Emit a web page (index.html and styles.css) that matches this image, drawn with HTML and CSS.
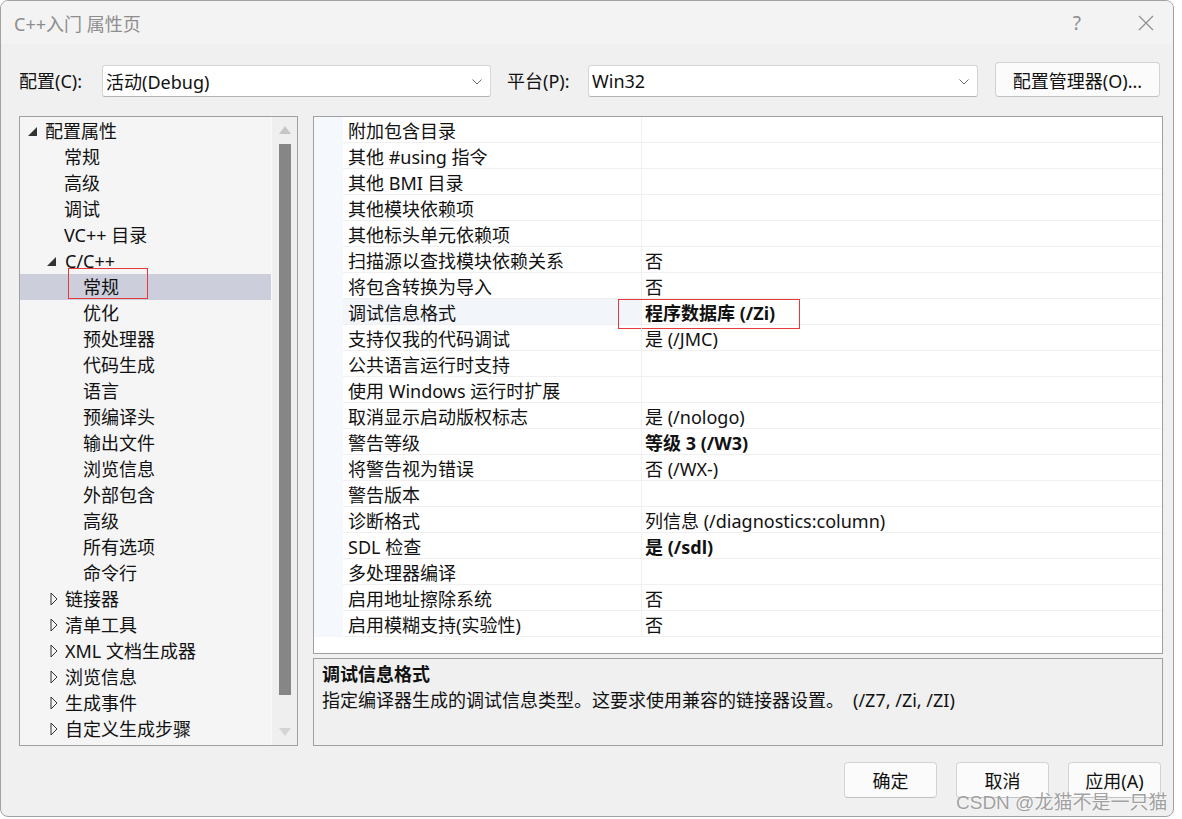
FILE: index.html
```html
<!DOCTYPE html>
<html lang="zh-CN">
<head>
    <meta charset="UTF-8">
    <meta name="viewport" content="width=device-width, initial-scale=1.0">
    <title>C++入门 属性页</title>
    <link rel="stylesheet" href="styles.css">
</head>
<body>
    <div class="window">
        <!-- 标题栏 -->
        <div class="titlebar">
            <span class="title">C++入门 属性页</span>
            <span class="tb-help">?</span>
            <span class="tb-close">
                <svg width="16" height="16" viewBox="0 0 16 16"><path d="M1 1L15 15M15 1L1 15" stroke="#8f8f8f" stroke-width="1.2" fill="none"/></svg>
            </span>
        </div>

        <div class="body">
            <!-- 配置 / 平台 -->
            <div class="config-row">
                <label class="cfg-label">配置(C):</label>
                <div class="combo combo-config">
                    <span>活动(Debug)</span>
                    <svg class="chev" width="10" height="6" viewBox="0 0 10 6"><polyline points="0.5,0.5 5,5 9.5,0.5" stroke="#6a6a6a" fill="none"/></svg>
                </div>
                <label class="cfg-label cfg-platform">平台(P):</label>
                <div class="combo combo-platform">
                    <span>Win32</span>
                    <svg class="chev" width="10" height="6" viewBox="0 0 10 6"><polyline points="0.5,0.5 5,5 9.5,0.5" stroke="#6a6a6a" fill="none"/></svg>
                </div>
                <button class="btn btn-manager">配置管理器(O)...</button>
            </div>

            <div class="main">
                <!-- 左侧树 -->
                <div class="tree">
                    <div class="tree-list">
                        <div class="tnode lv0"><span class="tw"><svg width="9" height="9" viewBox="0 0 9 9"><polygon points="9,0 9,9 0,9" fill="#333"/></svg></span>配置属性</div>
                        <div class="tnode lv1 leaf">常规</div>
                        <div class="tnode lv1 leaf">高级</div>
                        <div class="tnode lv1 leaf">调试</div>
                        <div class="tnode lv1 leaf">VC++ 目录</div>
                        <div class="tnode lv1"><span class="tw"><svg width="9" height="9" viewBox="0 0 9 9"><polygon points="9,0 9,9 0,9" fill="#333"/></svg></span>C/C++</div>
                        <div class="tnode lv2 selected">常规<span class="mark mark-tree"></span></div>
                        <div class="tnode lv2">优化</div>
                        <div class="tnode lv2">预处理器</div>
                        <div class="tnode lv2">代码生成</div>
                        <div class="tnode lv2">语言</div>
                        <div class="tnode lv2">预编译头</div>
                        <div class="tnode lv2">输出文件</div>
                        <div class="tnode lv2">浏览信息</div>
                        <div class="tnode lv2">外部包含</div>
                        <div class="tnode lv2">高级</div>
                        <div class="tnode lv2">所有选项</div>
                        <div class="tnode lv2">命令行</div>
                        <div class="tnode lv1"><span class="tw"><svg class="closed" width="8" height="14" viewBox="0 0 8 14"><polygon points="1,1 7,7 1,13" stroke="#333" fill="none"/></svg></span>链接器</div>
                        <div class="tnode lv1"><span class="tw"><svg class="closed" width="8" height="14" viewBox="0 0 8 14"><polygon points="1,1 7,7 1,13" stroke="#333" fill="none"/></svg></span>清单工具</div>
                        <div class="tnode lv1"><span class="tw"><svg class="closed" width="8" height="14" viewBox="0 0 8 14"><polygon points="1,1 7,7 1,13" stroke="#333" fill="none"/></svg></span>XML 文档生成器</div>
                        <div class="tnode lv1"><span class="tw"><svg class="closed" width="8" height="14" viewBox="0 0 8 14"><polygon points="1,1 7,7 1,13" stroke="#333" fill="none"/></svg></span>浏览信息</div>
                        <div class="tnode lv1"><span class="tw"><svg class="closed" width="8" height="14" viewBox="0 0 8 14"><polygon points="1,1 7,7 1,13" stroke="#333" fill="none"/></svg></span>生成事件</div>
                        <div class="tnode lv1"><span class="tw"><svg class="closed" width="8" height="14" viewBox="0 0 8 14"><polygon points="1,1 7,7 1,13" stroke="#333" fill="none"/></svg></span>自定义生成步骤</div>
                    </div>
                    <div class="vscroll">
                        <div class="arrow"><svg width="12" height="8" viewBox="0 0 12 8"><polygon points="0,8 6,0 12,8" fill="#c6c6c6"/></svg></div>
                        <div class="thumb"></div>
                        <div class="spacer"></div>
                        <div class="arrow"><svg width="12" height="8" viewBox="0 0 12 8"><polygon points="0,0 6,8 12,0" fill="#d4d4d4"/></svg></div>
                    </div>
                </div>

                <!-- 右侧属性表 -->
                <div class="right">
                    <div class="grid">
                        <div class="prow"><span class="pgut"></span><span class="pname">附加包含目录</span><span class="pval"></span></div>
                        <div class="prow"><span class="pgut"></span><span class="pname">其他 #using 指令</span><span class="pval"></span></div>
                        <div class="prow"><span class="pgut"></span><span class="pname">其他 BMI 目录</span><span class="pval"></span></div>
                        <div class="prow"><span class="pgut"></span><span class="pname">其他模块依赖项</span><span class="pval"></span></div>
                        <div class="prow"><span class="pgut"></span><span class="pname">其他标头单元依赖项</span><span class="pval"></span></div>
                        <div class="prow"><span class="pgut"></span><span class="pname">扫描源以查找模块依赖关系</span><span class="pval">否</span></div>
                        <div class="prow"><span class="pgut"></span><span class="pname">将包含转换为导入</span><span class="pval">否</span></div>
                        <div class="prow selected"><span class="pgut"></span><span class="pname">调试信息格式</span><span class="pval bold">程序数据库 (/Zi)</span><span class="mark mark-grid"></span></div>
                        <div class="prow"><span class="pgut"></span><span class="pname">支持仅我的代码调试</span><span class="pval">是 (/JMC)</span></div>
                        <div class="prow"><span class="pgut"></span><span class="pname">公共语言运行时支持</span><span class="pval"></span></div>
                        <div class="prow"><span class="pgut"></span><span class="pname">使用 Windows 运行时扩展</span><span class="pval"></span></div>
                        <div class="prow"><span class="pgut"></span><span class="pname">取消显示启动版权标志</span><span class="pval">是 (/nologo)</span></div>
                        <div class="prow"><span class="pgut"></span><span class="pname">警告等级</span><span class="pval bold">等级 3 (/W3)</span></div>
                        <div class="prow"><span class="pgut"></span><span class="pname">将警告视为错误</span><span class="pval">否 (/WX-)</span></div>
                        <div class="prow"><span class="pgut"></span><span class="pname">警告版本</span><span class="pval"></span></div>
                        <div class="prow"><span class="pgut"></span><span class="pname">诊断格式</span><span class="pval">列信息 (/diagnostics:column)</span></div>
                        <div class="prow"><span class="pgut"></span><span class="pname">SDL 检查</span><span class="pval bold">是 (/sdl)</span></div>
                        <div class="prow"><span class="pgut"></span><span class="pname">多处理器编译</span><span class="pval"></span></div>
                        <div class="prow"><span class="pgut"></span><span class="pname">启用地址擦除系统</span><span class="pval">否</span></div>
                        <div class="prow"><span class="pgut"></span><span class="pname">启用模糊支持(实验性)</span><span class="pval">否</span></div>
                    </div>
                    <div class="desc">
                        <div class="desc-title">调试信息格式</div>
                        <div class="desc-text">指定编译器生成的调试信息类型。这要求使用兼容的链接器设置。<span class="desc-opts">(/Z7, /Zi, /ZI)</span></div>
                    </div>
                </div>
            </div>

            <div class="footer">
                <button class="btn">确定</button>
                <button class="btn">取消</button>
                <button class="btn">应用(A)</button>
            </div>
        </div>

        <div class="watermark">CSDN @龙猫不是一只猫</div>
    </div>
</body>
</html>
```

FILE: styles.css
```css
* {
    box-sizing: border-box;
    margin: 0;
    padding: 0;
}

body {
    background: #ffffff;
    font-family: "Noto Sans", "Noto Sans CJK SC", sans-serif;
    font-size: 18px;
    color: #111;
}

.window {
    position: relative;
    width: 1174px;
    height: 817px;
    border: 1px solid #a2a2a2;
    border-radius: 8px;
    background: #f0f0f0;
    overflow: hidden;
}

/* 标题栏 */
.titlebar {
    display: flex;
    align-items: center;
    height: 43px;
    padding: 0 19px 0 13px;
    background: #f3f3f3;
    color: #8d8d8d;
}

.title {
    flex: 1;
    font-size: 18px;
}

.tb-help {
    font-size: 19px;
}

.tb-close {
    display: flex;
    margin-left: 57px;
}

.body {
    padding: 0 10px 0 18px;
}

/* 配置行 */
.config-row {
    display: flex;
    align-items: flex-end;
    padding-top: 18px;
    height: 53px;
}

.cfg-label {
    width: 83px;
    height: 32px;
    line-height: 32px;
}

.cfg-platform {
    width: 81px;
    margin-left: 16px;
}

.combo {
    display: flex;
    align-items: center;
    justify-content: space-between;
    height: 32px;
    padding: 0 8px 0 3px;
    background: #fff;
    border: 1px solid #d6d6d6;
    border-bottom-color: #b4b4b4;
    border-radius: 3px;
}

.combo-config {
    width: 389px;
}

.combo-platform {
    width: 390px;
}

.chev {
    margin-top: 2px;
}

.btn {
    font-family: inherit;
    font-size: 18px;
    color: #111;
    width: 93px;
    height: 36px;
    background: #fbfbfb;
    border: 1px solid #d3d3d3;
    border-bottom-color: #c2c2c2;
    border-radius: 4px;
}

.btn-manager {
    width: 165px;
    height: 35px;
    margin-left: 17px;
}

/* 主区域 */
.main {
    display: flex;
    gap: 15px;
    margin-top: 19px;
    height: 630px;
}

.tree {
    display: flex;
    width: 279px;
    border: 1px solid #a0a0a0;
    background: #f5f5f5;
}

.tree-list {
    flex: 1;
    padding-top: 1px;
}

.tnode {
    position: relative;
    display: flex;
    align-items: center;
    height: 26px;
    line-height: 24px;
    white-space: nowrap;
}

.tw {
    display: flex;
    align-items: center;
    flex: none;
}

.lv0 {
    padding-left: 8px;
}

.lv0 .tw {
    width: 17px;
}

.lv1 {
    padding-left: 27px;
}

.lv1 .tw {
    width: 18px;
}

.lv1 .closed {
    margin-left: 3px;
}

.lv1.leaf {
    padding-left: 44px;
}

.lv2 {
    padding-left: 63px;
}

.tnode.selected {
    background: #cccedb;
}

.mark {
    position: absolute;
    border: 1px solid #e5393b;
}

.mark-tree {
    left: 48px;
    top: -6px;
    width: 80px;
    height: 31px;
}

.vscroll {
    display: flex;
    flex-direction: column;
    align-items: center;
    width: 26px;
    background: #efefef;
    border-left: 1px solid #fafafa;
}

.arrow {
    display: flex;
    align-items: center;
    justify-content: center;
    height: 26px;
}

.thumb {
    width: 12px;
    height: 551px;
    margin-top: 1px;
    background: #868686;
}

.spacer {
    flex: 1;
}

/* 属性表 */
.right {
    display: flex;
    flex-direction: column;
    gap: 4px;
    flex: 1;
}

.grid {
    height: 538px;
    background: #fff;
    border: 1px solid #a0a0a0;
}

.prow {
    position: relative;
    display: flex;
    height: 26px;
    white-space: nowrap;
}

.pgut {
    width: 29px;
    flex: none;
    background: #f5f8fc;
}

.pname,
.pval {
    display: flex;
    align-items: center;
    border-bottom: 1px solid #f0f0f0;
}

.pname {
    width: 299px;
    flex: none;
    padding-left: 5px;
    border-right: 1px solid #f0f0f0;
}

.pval {
    flex: 1;
    padding-left: 3px;
}

.prow.selected .pname {
    background: #f2f5fa;
}

.bold {
    font-weight: 700;
}

.mark-grid {
    left: 304px;
    top: 0;
    width: 182px;
    height: 30px;
}

.desc {
    height: 88px;
    padding: 2px 8px;
    border: 1px solid #a0a0a0;
    background: #f0f0f0;
}

.desc-title {
    font-weight: 700;
    line-height: 26px;
}

.desc-text {
    line-height: 26px;
}

.desc-opts {
    margin-left: 9px;
}

/* 底部按钮 */
.footer {
    display: flex;
    justify-content: flex-end;
    gap: 19px;
    margin-top: 16px;
    padding-right: 2px;
}

.watermark {
    position: absolute;
    left: 955px;
    top: 786px;
    font-family: "Liberation Sans", "Noto Sans CJK SC", sans-serif;
    font-size: 19px;
    color: rgba(120, 120, 120, 0.7);
    text-shadow: 0 0 2px #fff;
    white-space: nowrap;
}
```
